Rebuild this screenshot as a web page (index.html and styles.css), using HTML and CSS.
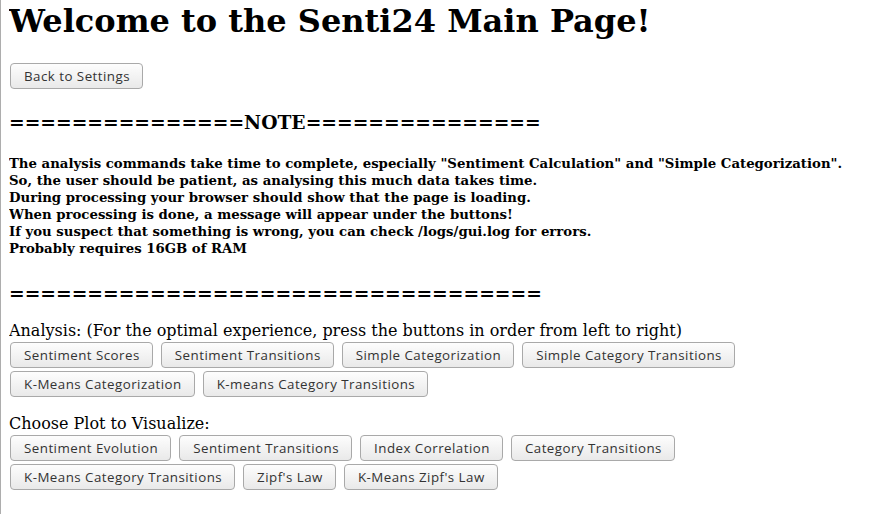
FILE: index.html
```html
<!DOCTYPE html>
<html lang="en">
<head>
<meta charset="utf-8">
<title>Senti24</title>
<link rel="stylesheet" href="styles.css">
</head>
<body>
<h1 class="title">Welcome to the Senti24 Main Page!</h1>
<div class="back-row"><button class="btn">Back to Settings</button></div>
<h3 class="rule rule-top">===============NOTE===============</h3>
<p class="note">The analysis commands take time to complete, especially "Sentiment Calculation" and "Simple Categorization".<br>So, the user should be patient, as analysing this much data takes time.<br>During processing your browser should show that the page is loading.<br>When processing is done, a message will appear under the buttons!<br>If you suspect that something is wrong, you can check /logs/gui.log for errors.<br>Probably requires 16GB of RAM</p>
<h3 class="rule rule-bottom">==================================</h3>
<div class="section">
  <div class="label">Analysis: (For the optimal experience, press the buttons in order from left to right)</div>
  <div class="rows">
    <div class="row">
      <button class="btn">Sentiment Scores</button>
      <button class="btn">Sentiment Transitions</button>
      <button class="btn">Simple Categorization</button>
      <button class="btn">Simple Category Transitions</button>
    </div>
    <div class="row">
      <button class="btn">K-Means Categorization</button>
      <button class="btn">K-means Category Transitions</button>
    </div>
  </div>
</div>
<div class="section">
  <div class="label">Choose Plot to Visualize:</div>
  <div class="rows">
    <div class="row">
      <button class="btn">Sentiment Evolution</button>
      <button class="btn">Sentiment Transitions</button>
      <button class="btn">Index Correlation</button>
      <button class="btn">Category Transitions</button>
    </div>
    <div class="row">
      <button class="btn">K-Means Category Transitions</button>
      <button class="btn">Zipf's Law</button>
      <button class="btn">K-Means Zipf's Law</button>
    </div>
  </div>
</div>
</body>
</html>
```
FILE: styles.css
```css
html {
  border-left: 1px solid #adadad;
  min-height: 100%;
  box-sizing: border-box;
  background: #ffffff;
}
body {
  margin: 0 8px;
  padding-top: 3px;
  font-family: "DejaVu Serif", serif;
  color: #000;
}
.title {
  margin: 0 0 23px;
  font-size: 32px;
  font-weight: bold;
  line-height: 37px;
}
.back-row {
  display: flex;
  padding-left: 1px;
}
.btn {
  font-family: "Open Sans", "DejaVu Sans", sans-serif;
  font-size: 13.33px;
  letter-spacing: 0.47px;
  color: #333333;
  height: 26px;
  padding: 0 12px 0 13px;
  border: 1px solid #a9a9a9;
  border-radius: 4px;
  background: linear-gradient(#fdfdfd, #e9e9e9);
  margin: 0;
  line-height: 24px;
  white-space: nowrap;
}
.rule {
  font-size: 18.72px;
  font-weight: bold;
  line-height: 22px;
  margin: 0;
}
.rule-top {
  margin-top: 22px;
}
.note {
  margin: 22px 0 0;
  font-size: 13.28px;
  font-weight: bold;
  line-height: 17px;
}
.rule-bottom {
  margin-top: 25px;
}
.section {
  margin-top: 17px;
}
.label {
  font-size: 16px;
  line-height: 19px;
}
.rows {
  display: flex;
  flex-direction: column;
  gap: 3px;
  margin-top: 2px;
  padding-left: 1px;
}
.row {
  display: flex;
  gap: 8px;
}
```
